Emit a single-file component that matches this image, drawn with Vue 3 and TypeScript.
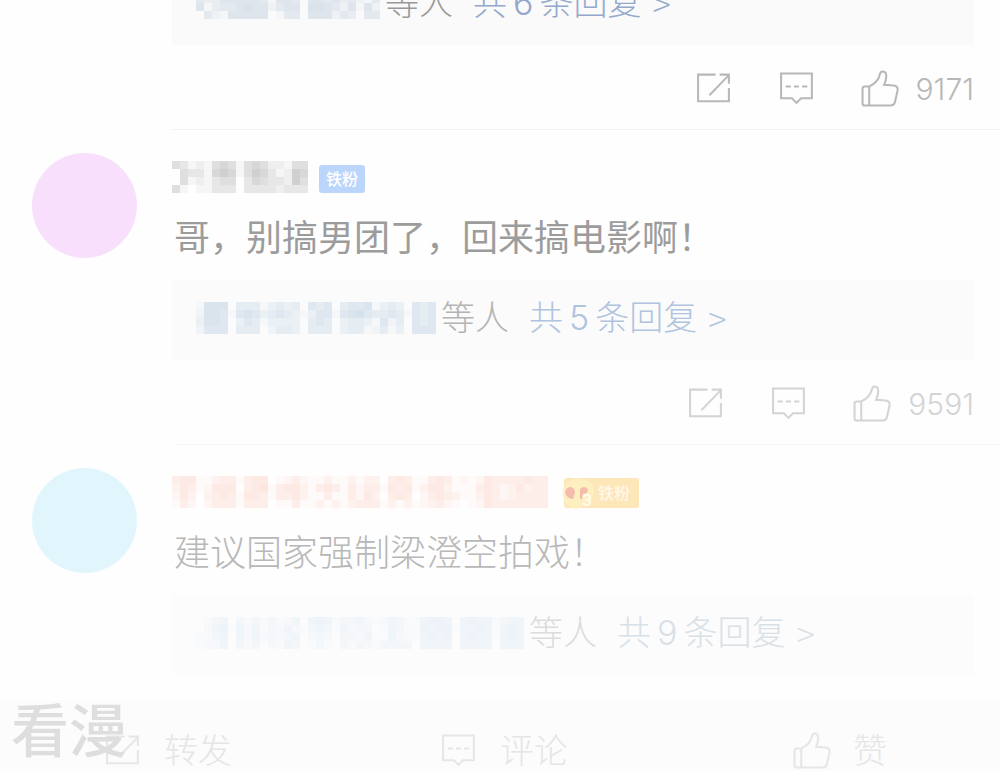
<script setup lang="ts">
import { h, type FunctionalComponent } from 'vue'

interface Comment {
  id: number
  tone: string
  name?: string[]
  badge?: 'blue' | 'gold'
  text?: string
  replier: string[]
  replies: number
  likes?: string
}

const CELL = 8

/* Pixelated user name: every digit is the strength of one square. */
const Mosaic: FunctionalComponent<{ rows: string[] }> = (props) => {
  const rows = props.rows.map((r) => r.replace(/ /g, ''))
  const width = rows[0].length * CELL
  const height = rows.length * CELL
  return h(
    'svg',
    { width, height, viewBox: `0 0 ${width} ${height}`, 'aria-hidden': 'true' },
    rows.flatMap((row, y) =>
      [...row].map((c, x) =>
        h('rect', {
          x: x * CELL,
          y: y * CELL,
          width: CELL,
          height: CELL,
          fill: 'currentColor',
          'fill-opacity': Number(c) * 0.03,
        }),
      ),
    ),
  )
}
Mosaic.props = ['rows']

const stroke = { fill: 'none', stroke: 'currentColor', 'stroke-width': 2 }
const paths: Record<string, string[]> = {
  share: ['M20 4H3V30H33V17M24 4H33V13', 'M14 24L33 4.500'],
  comment: ['M3 3H33V27H22.500L18 31.500L13.500 27H3Z', 'M7.500 15.500H12.500M15.500 15.500H20.500M23.500 15.500H28.500'],
  like: [
    'M8 15.500H3.500Q1.500 15.500 1.500 17.500V32Q1.500 34 3.500 34H29Q32 34 33 31L35.500 20Q36.500 15 32 14.500L22.500 14Q25 9 24.500 4Q24 1 21 1Q19 1 18.500 3.500Q16.500 12 8 15.500Z',
    'M8 15.500V34',
  ],
}
const Icon: FunctionalComponent<{ name: string }> = (props) =>
  h(
    'svg',
    { width: 38, height: 38, viewBox: '0 0 37 36', 'aria-hidden': 'true' },
    paths[props.name].map((d) => h('path', { d, ...stroke })),
  )
Icon.props = ['name']

const comments: Comment[] = [
  {
    id: 1,
    tone: 'first',
    replier: [
      '2124 56565 0 445 0 4455 1 3431',
      '4335 55554 1 554 0 5545 3 4214',
      '5134 45655 2 455 0 6654 2 5152',
      '0421 55555 0 144 0 5552 4 3044',
    ],
    replies: 6,
    likes: '9171',
  },
  {
    id: 2,
    tone: 'second',
    name: [
      '431 21 454 1 454 221 44',
      '043 31 565 1 465 312 65',
      '041 21 344 0 354 332 64',
      '410 11 333 0 333 323 33',
    ],
    badge: 'blue',
    text: '哥，别搞男团了，回来搞电影啊！',
    replier: [
      '1666 0 444 1 3434 0 545 0 4556 1 343 0 545',
      '2665 1 565 3 4543 1 355 1 5675 4 454 1 545',
      '3665 0 354 1 3333 0 454 0 3443 1 524 0 545',
      '2555 0 444 0 2443 0 444 0 3441 2 413 0 555',
    ],
    replies: 5,
    likes: '9591',
  },
  {
    id: 3,
    tone: 'third',
    name: [
      '455 1 1344 1 455 0 1242 1 131 1 3133 0 454 1 1454 12 1 2 54444544',
      '354 1 2555 0 456 1 4553 1 454 1 4244 1 545 1 3553 11 1 4 54235344',
      '253 0 3454 1 554 1 4453 1 141 1 4253 0 454 0 2454 31 1 3 54234444',
      '142 0 2444 1 444 0 1141 1 313 1 3444 1 313 1 2342 10 1 2 54444444',
    ],
    badge: 'gold',
    text: '建议国家强制梁澄空拍戏！',
    replier: [
      '0134 0 313 1 3124 0 454 1 3342 1 2431 1 4554 0 4544 1 344',
      '0245 1 424 1 3242 1 343 1 4233 0 1431 1 5455 1 4454 1 454',
      '1134 0 424 2 3234 0 232 0 3324 1 1421 1 4545 0 4544 1 454',
      '1224 0 313 0 2143 0 131 0 3132 1 3333 0 4444 0 4444 0 444',
    ],
    replies: 9,
  },
]

const tabs = [
  { icon: 'share', label: '转发' },
  { icon: 'comment', label: '评论' },
  { icon: 'like', label: '赞' },
]
</script>

<template>
  <main class="page">
    <article v-for="c in comments" :key="c.id" class="comment" :class="c.tone">
      <div class="side"><div v-if="c.name" class="avatar"></div></div>
      <div class="body">
        <header v-if="c.name" class="head">
          <Mosaic class="name" :rows="c.name" />
          <span v-if="c.badge === 'blue'" class="badge blue">铁粉</span>
          <span v-else class="badge gold">
            <svg class="emblem" width="38" height="36" viewBox="0 0 38 36" aria-hidden="true">
              <path d="M3 18Q3 7 11 6Q17 0 24 5Q34 6 34 17Q33 28 25 30Q16 37 8 31Q3 27 3 18Z" fill="#fdefc0" />
              <path d="M5 17Q6 12 11 12Q15 13 15 18L13 24Q6 23 5 17Z" fill="#f5bcae" />
              <path d="M20 14Q24 10 28 14L27 18L23 19L22 24H20Z" fill="#f5bcae" />
            </svg>
            <span class="level">3</span>
            <span>铁粉</span>
          </span>
        </header>
        <p v-if="c.text" class="text">{{ c.text }}</p>
        <div class="replies">
          <Mosaic class="replier" :rows="c.replier" />
          <span class="others">等人</span>
          <a href="#" class="more">共<span class="count">{{ c.replies }}</span>条回复<span class="arrow">&gt;</span></a>
        </div>
        <div v-if="c.likes" class="actions">
          <button type="button" aria-label="转发"><Icon name="share" /></button>
          <button type="button" aria-label="评论"><Icon name="comment" /></button>
          <button type="button" class="like"><Icon name="like" />{{ c.likes }}</button>
        </div>
      </div>
    </article>

    <nav class="tabs">
      <button v-for="t in tabs" :key="t.icon" type="button"><Icon :name="t.icon" />{{ t.label }}</button>
    </nav>
    <div class="watermark">看漫</div>
  </main>
</template>

<style>
body {
  margin: 0;
  background: #fefefe;
}
</style>

<style scoped>
.page {
  position: relative;
  overflow: hidden;
  min-height: 100vh;
  background: #fefefe;
  font-family: Inter, "Noto Sans CJK SC", sans-serif;
}
button {
  display: flex;
  align-items: center;
  margin: 0;
  padding: 0;
  border: 0;
  background: none;
  color: inherit;
  font: inherit;
}
svg {
  display: block;
  flex: none;
}
.comment {
  display: flex;
}
.side {
  flex: none;
  width: 140px;
  padding: 23px 0 0 32px;
}
.avatar {
  width: 105px;
  height: 105px;
  border-radius: 50%;
}
.body {
  flex: 1;
  min-width: 0;
  padding: 30px 26px 21px 0;
  border-bottom: 1px solid #f8f8f8;
}
.first {
  margin-top: -65px;
}
.first .body {
  border-color: #f1f1f1;
}
.third .body {
  padding-bottom: 24px;
  border-color: transparent;
}
.head {
  display: flex;
  align-items: center;
  gap: 11px;
  height: 34px;
}
.badge {
  display: flex;
  align-items: center;
  box-sizing: border-box;
  color: #fff;
  font-size: 16px;
  font-weight: 500;
  line-height: 28px;
  border-radius: 3px;
}
.blue {
  padding: 0 7px;
  margin-top: 4px;
  background: #bcd6fb;
}
.gold {
  position: relative;
  height: 30px;
  margin: 2px 0 0 5px;
  padding: 0 9px 0 34px;
  background: #fde6b8;
  color: #fff8e8;
}
.emblem {
  position: absolute;
  left: -4px;
  top: -3px;
}
.level {
  position: absolute;
  left: 18px;
  top: 12px;
  line-height: 20px;
  color: #fffdf5;
}
.text {
  margin: 20px 0 18px;
  padding-left: 2px;
  font-size: 36px;
  line-height: 48px;
}
.replies {
  display: flex;
  align-items: center;
  padding: 18px 24px 22px;
  font-size: 34px;
  font-weight: 300;
  line-height: 40px;
}
.others {
  margin: 0 20px 0 5px;
}
.more {
  display: flex;
  align-items: center;
  text-decoration: none;
}
.count {
  margin: 0 6px;
}
.arrow {
  margin-left: 11px;
  font-family: "Noto Sans CJK SC", sans-serif;
}
.actions {
  display: flex;
  justify-content: flex-end;
  align-items: center;
  gap: 45px;
  margin-top: 25px;
  font-size: 30px;
  font-weight: 300;
  line-height: 38px;
}
.like {
  gap: 17px;
}

.first .replies { background: #fafafa; }
.first .replier { color: #4672a8; }
.first .others { color: #999; }
.first .more { color: #93a9cc; }
.first .actions { color: #b8b8b8; }

.second .avatar { background: #f8dffc; }
.second .name { color: #000; }
.second .text { color: #9c9c9c; }
.second .replies { background: #fbfbfb; }
.second .replier { color: #4682b4; }
.second .others { color: #b4b4b4; }
.second .more { color: #b0c3df; }
.second .actions { color: #d4d4d4; }

.third .avatar { background: #e1f6fc; }
.third .name { color: #fa7850; }
.third .text { color: #b8b8b8; font-weight: 300; }
.third .replies { background: #fcfcfc; }
.third .replier { color: #a0c3eb; }
.third .others { color: #dcdcdc; }
.third .more { color: #d8e1e8; }

.tabs {
  display: grid;
  grid-template-columns: repeat(3, 1fr);
  width: calc(100% + 8px);
  padding: 32px 0 1px;
  background: #fcfcfc;
  color: #e6e6e6;
  font-size: 34px;
  font-weight: 300;
  line-height: 38px;
}
.tabs button {
  justify-content: center;
  gap: 22px;
}
.watermark {
  position: absolute;
  left: 11px;
  bottom: 10px;
  color: #dedede;
  font-size: 58px;
  font-weight: 500;
  line-height: 60px;
  pointer-events: none;
}
</style>
